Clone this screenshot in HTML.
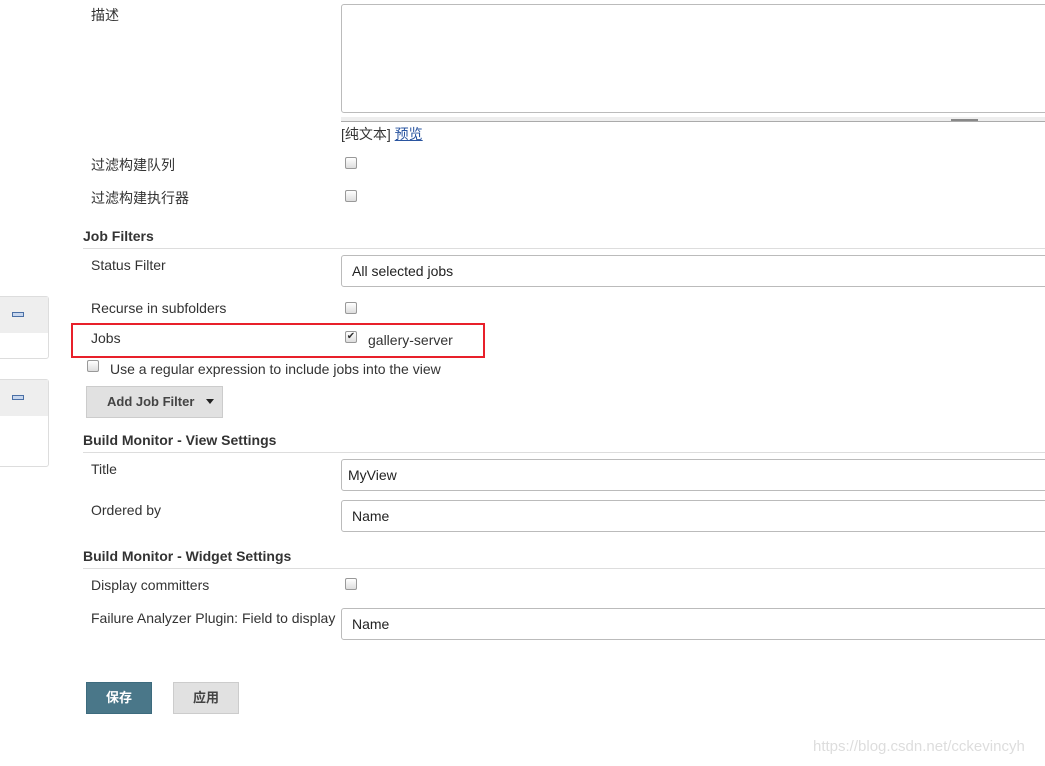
<!DOCTYPE html>
<html><head><meta charset="utf-8"><style>
*{box-sizing:border-box}
body{margin:0;width:1045px;height:766px;overflow:hidden;background:#fff;font-family:"Liberation Sans","Noto Sans CJK SC",sans-serif;font-size:14px;color:#333;position:relative}
.a{position:absolute}
.lbl{position:absolute;left:91px;font-size:14px;color:#333}
.cb{position:absolute;width:12px;height:12px;border:1px solid #999;border-radius:2px;background:linear-gradient(#fff,#ddd)}
.hd{position:absolute;left:83px;font-weight:bold;font-size:14px;color:#333}
.hr{position:absolute;left:83px;right:0;height:1px;background:#ddd}
.in{position:absolute;left:341px;width:720px;height:32px;border:1px solid #bbb;border-radius:3px;padding:0 0 0 10px;line-height:30px;font-size:14px;color:#222}
.side{position:absolute;left:-10px;width:59px;border:1px solid #ddd;border-radius:3px;background:#fff}
.side .t{height:36px;background:#eee;position:relative}
.side .t i{position:absolute;left:21px;top:15px;width:12px;height:5px;border:1px solid #4a6fa5;background:#c8d7ee}
</style></head><body>
<div class="lbl" style="top:5px">描述</div>
<div class="a" style="left:341px;top:4px;width:720px;height:109px;border:1px solid #bbb;border-radius:3px"></div>
<div class="a" style="left:341px;top:117px;width:720px;height:5px;background:#eee;border-bottom:1px solid #aaa"></div>
<div class="a" style="left:951px;top:119px;width:27px;height:2px;border-top:1px solid #888;border-bottom:1px solid #888"></div>
<div class="a" style="left:341px;top:124px;font-size:14px">[纯文本] <span style="color:#2a55a0;text-decoration:underline">预览</span></div>
<div class="lbl" style="top:155px">过滤构建队列</div><div class="cb" style="left:345px;top:157px"></div>
<div class="lbl" style="top:188px">过滤构建执行器</div><div class="cb" style="left:345px;top:190px"></div>
<div class="hd" style="top:228px">Job Filters</div><div class="hr" style="top:248px"></div>
<div class="lbl" style="top:257px">Status Filter</div>
<div class="in" style="top:255px">All selected jobs</div>
<div class="side" style="top:296px;height:63px"><div class="t"><i></i></div></div>
<div class="side" style="top:379px;height:88px"><div class="t"><i></i></div></div>
<div class="lbl" style="top:300px">Recurse in subfolders</div><div class="cb" style="left:345px;top:302px"></div>
<div class="a" style="left:71px;top:323px;width:414px;height:35px;border:2px solid #e8202a"></div>
<div class="lbl" style="top:330px">Jobs</div>
<div class="cb" style="left:345px;top:331px;font-size:10px;line-height:10px;text-align:center;color:#333">✔</div>
<div class="a" style="left:368px;top:332px">gallery-server</div>
<div class="cb" style="left:87px;top:360px"></div>
<div class="a" style="left:110px;top:361px">Use a regular expression to include jobs into the view</div>
<div class="a" style="left:86px;top:386px;width:137px;height:32px;background:#e1e1e1;border:1px solid #ccc;font-weight:bold;font-size:13px;color:#444;line-height:30px;padding-left:20px">Add Job Filter<span style="position:absolute;left:119px;top:12px;border-left:4px solid transparent;border-right:4px solid transparent;border-top:5px solid #222"></span></div>
<div class="hd" style="top:432px">Build Monitor - View Settings</div><div class="hr" style="top:452px"></div>
<div class="lbl" style="top:461px">Title</div>
<div class="in" style="top:459px;padding-left:6px">MyView</div>
<div class="lbl" style="top:502px">Ordered by</div>
<div class="in" style="top:500px">Name</div>
<div class="hd" style="top:548px">Build Monitor - Widget Settings</div><div class="hr" style="top:568px"></div>
<div class="lbl" style="top:577px">Display committers</div><div class="cb" style="left:345px;top:578px"></div>
<div class="lbl" style="top:610px">Failure Analyzer Plugin: Field to display</div>
<div class="in" style="top:608px">Name</div>
<div class="a" style="left:86px;top:682px;width:66px;height:32px;background:#4a7789;border:1px solid #3d6b7e;color:#fff;font-weight:bold;font-size:13px;text-align:center;line-height:30px">保存</div>
<div class="a" style="left:173px;top:682px;width:66px;height:32px;background:#e1e1e1;border:1px solid #ccc;color:#444;font-weight:bold;font-size:13px;text-align:center;line-height:30px">应用</div>
<div class="a" style="left:813px;top:738px;color:#ddd;font-size:15px">https://blog.csdn.net/cckevincyh</div>
</body></html>
